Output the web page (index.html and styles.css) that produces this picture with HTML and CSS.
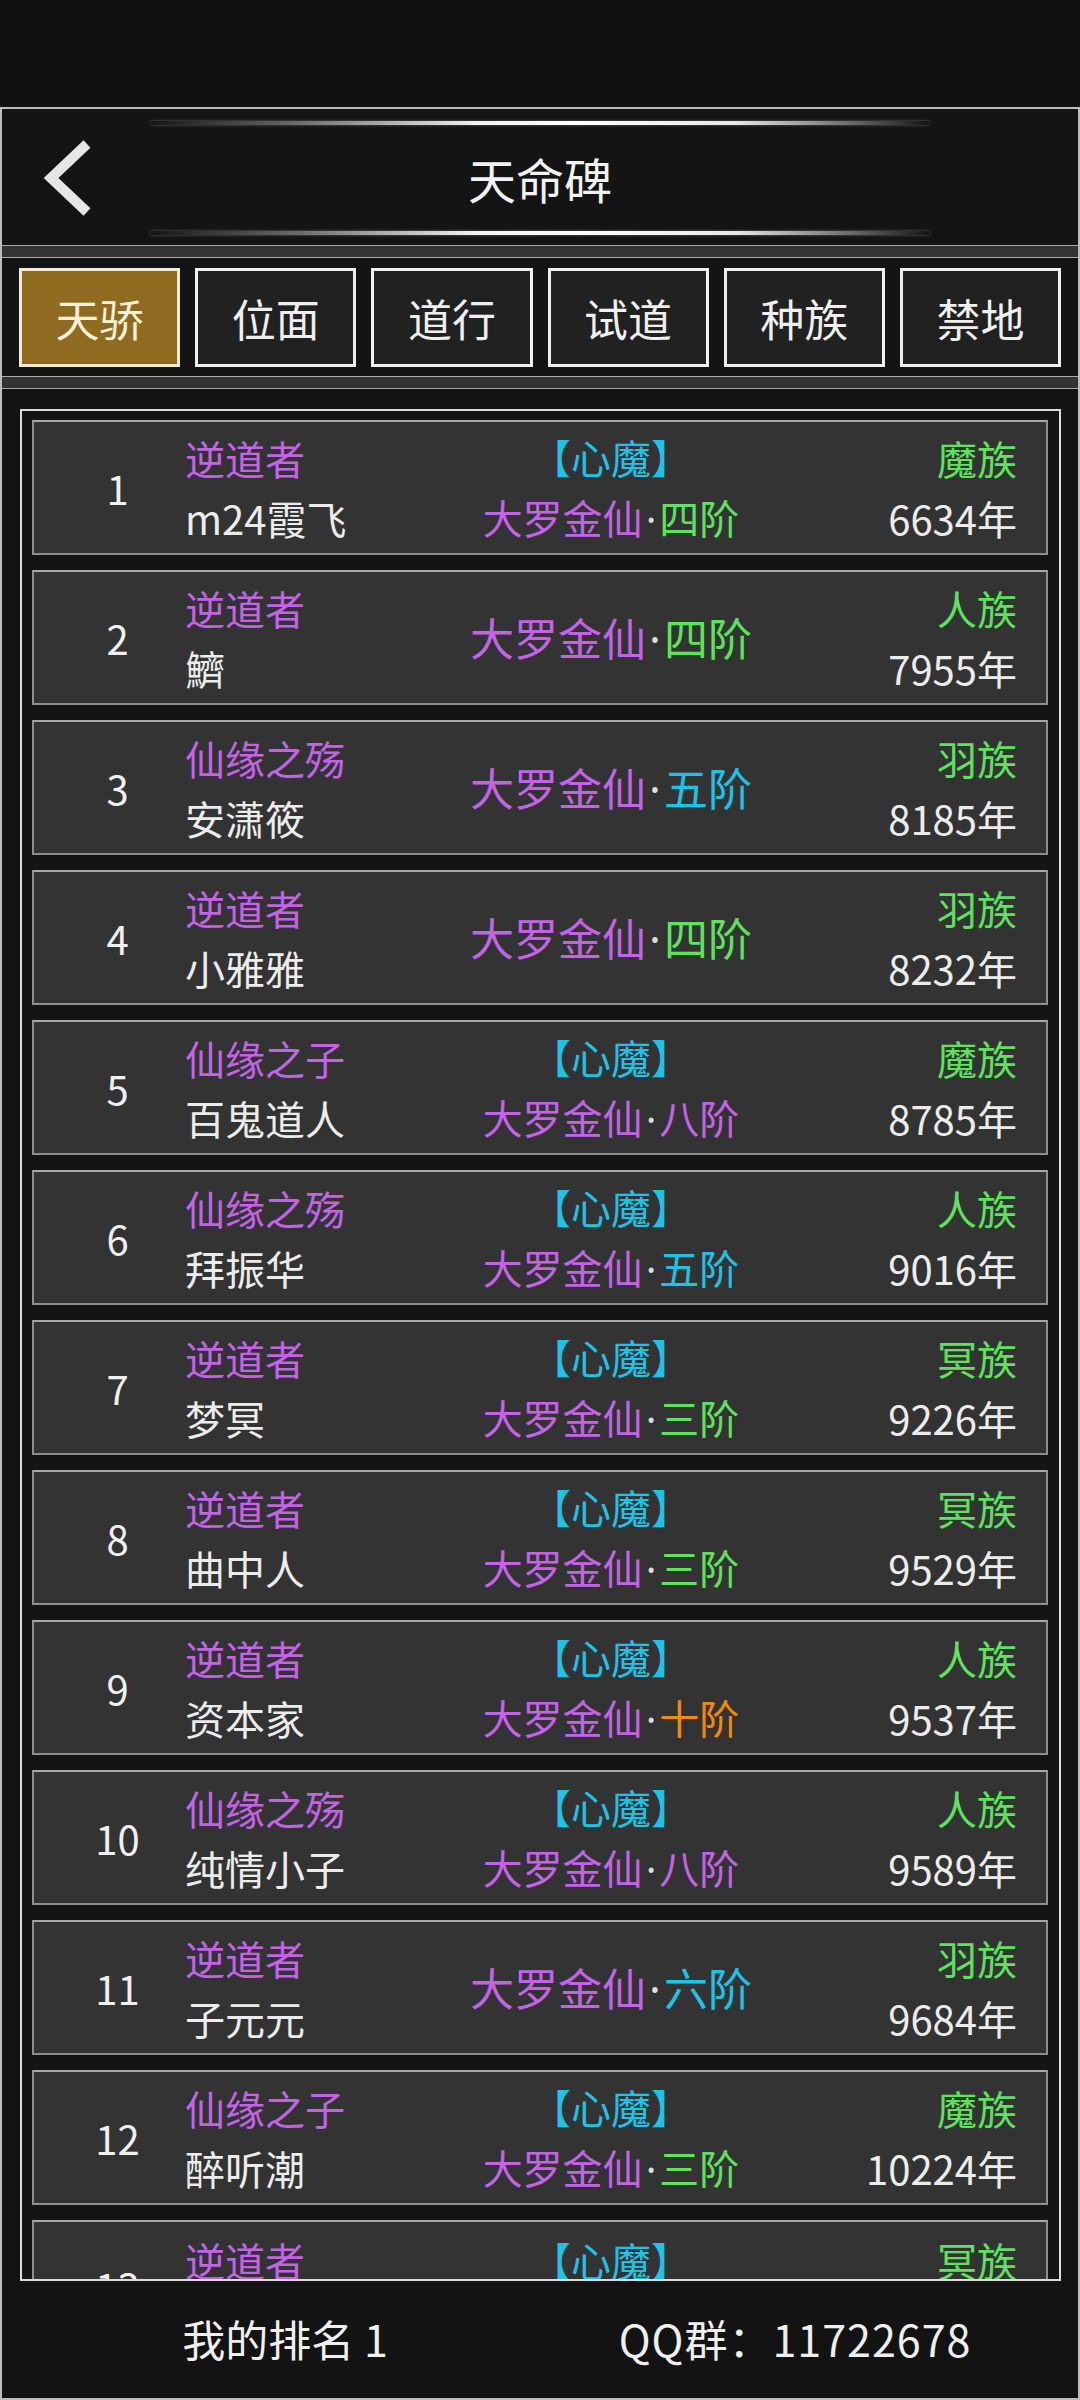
FILE: index.html
```html
<!DOCTYPE html>
<html lang="zh-CN">
<head>
<meta charset="utf-8">
<title>天命碑</title>
<link rel="stylesheet" href="styles.css">
</head>
<body>
<div class="status"></div>
<div class="app">
  <header class="header">
    <div class="glow"></div>
    <div class="header-mid">
      <div class="back">
        <svg width="50" height="80" viewBox="0 0 50 80"><polyline points="44,6 8,40 44,74" fill="none" stroke="#e6e6e6" stroke-width="10" stroke-linejoin="miter"/></svg>
      </div>
      <div class="title">天命碑</div>
      <div></div>
    </div>
    <div class="glow"></div>
  </header>
  <div class="sep"></div>
  <nav class="tabs">
    <div class="tab active">天骄</div>
    <div class="tab">位面</div>
    <div class="tab">道行</div>
    <div class="tab">试道</div>
    <div class="tab">种族</div>
    <div class="tab">禁地</div>
  </nav>
  <div class="sep"></div>
  <main class="list-wrap">
    <div class="list">
      <div class="card"><div class="rank">1</div><div class="col name"><span class="p">逆道者</span><span>m24霞飞</span></div><div class="col mid"><span class="c">【心魔】</span><span><span class="p">大罗金仙</span><span class="dot">·</span><span class="g">四阶</span></span></div><div class="col right"><span class="g">魔族</span><span>6634年</span></div></div>
      <div class="card"><div class="rank">2</div><div class="col name"><span class="p">逆道者</span><span>鱭</span></div><div class="col mid big"><span><span class="p">大罗金仙</span><span class="dot">·</span><span class="g">四阶</span></span></div><div class="col right"><span class="g">人族</span><span>7955年</span></div></div>
      <div class="card"><div class="rank">3</div><div class="col name"><span class="p">仙缘之殇</span><span>安潇筱</span></div><div class="col mid big"><span><span class="p">大罗金仙</span><span class="dot">·</span><span class="c">五阶</span></span></div><div class="col right"><span class="g">羽族</span><span>8185年</span></div></div>
      <div class="card"><div class="rank">4</div><div class="col name"><span class="p">逆道者</span><span>小雅雅</span></div><div class="col mid big"><span><span class="p">大罗金仙</span><span class="dot">·</span><span class="g">四阶</span></span></div><div class="col right"><span class="g">羽族</span><span>8232年</span></div></div>
      <div class="card"><div class="rank">5</div><div class="col name"><span class="p">仙缘之子</span><span>百鬼道人</span></div><div class="col mid"><span class="c">【心魔】</span><span><span class="p">大罗金仙</span><span class="dot">·</span><span class="p">八阶</span></span></div><div class="col right"><span class="g">魔族</span><span>8785年</span></div></div>
      <div class="card"><div class="rank">6</div><div class="col name"><span class="p">仙缘之殇</span><span>拜振华</span></div><div class="col mid"><span class="c">【心魔】</span><span><span class="p">大罗金仙</span><span class="dot">·</span><span class="c">五阶</span></span></div><div class="col right"><span class="g">人族</span><span>9016年</span></div></div>
      <div class="card"><div class="rank">7</div><div class="col name"><span class="p">逆道者</span><span>梦冥</span></div><div class="col mid"><span class="c">【心魔】</span><span><span class="p">大罗金仙</span><span class="dot">·</span><span class="g">三阶</span></span></div><div class="col right"><span class="g">冥族</span><span>9226年</span></div></div>
      <div class="card"><div class="rank">8</div><div class="col name"><span class="p">逆道者</span><span>曲中人</span></div><div class="col mid"><span class="c">【心魔】</span><span><span class="p">大罗金仙</span><span class="dot">·</span><span class="g">三阶</span></span></div><div class="col right"><span class="g">冥族</span><span>9529年</span></div></div>
      <div class="card"><div class="rank">9</div><div class="col name"><span class="p">逆道者</span><span>资本家</span></div><div class="col mid"><span class="c">【心魔】</span><span><span class="p">大罗金仙</span><span class="dot">·</span><span class="o">十阶</span></span></div><div class="col right"><span class="g">人族</span><span>9537年</span></div></div>
      <div class="card"><div class="rank">10</div><div class="col name"><span class="p">仙缘之殇</span><span>纯情小子</span></div><div class="col mid"><span class="c">【心魔】</span><span><span class="p">大罗金仙</span><span class="dot">·</span><span class="p">八阶</span></span></div><div class="col right"><span class="g">人族</span><span>9589年</span></div></div>
      <div class="card"><div class="rank">11</div><div class="col name"><span class="p">逆道者</span><span>子元元</span></div><div class="col mid big"><span><span class="p">大罗金仙</span><span class="dot">·</span><span class="c">六阶</span></span></div><div class="col right"><span class="g">羽族</span><span>9684年</span></div></div>
      <div class="card"><div class="rank">12</div><div class="col name"><span class="p">仙缘之子</span><span>醉听潮</span></div><div class="col mid"><span class="c">【心魔】</span><span><span class="p">大罗金仙</span><span class="dot">·</span><span class="g">三阶</span></span></div><div class="col right"><span class="g">魔族</span><span>10224年</span></div></div>
      <div class="card card-last"><div class="rank">13</div><div class="col name"><span class="p">逆道者</span></div><div class="col mid"><span class="c">【心魔】</span></div><div class="col right"><span class="g">冥族</span></div></div>
    </div>
  </main>
  <footer class="footer">
    <div class="f-left">我的排名 1</div>
    <div class="f-right">QQ群：11722678</div>
  </footer>
</div>
</body>
</html>
```

FILE: styles.css
```css
* { box-sizing: border-box; }
html, body {
  margin: 0;
  padding: 0;
  background: #111111;
}
body {
  width: 1080px;
  height: 2400px;
  overflow: hidden;
  font-family: "Noto Sans CJK SC", "Noto Sans", sans-serif;
  color: #ececec;
}
.status {
  height: 107px;
  background: #111111;
}
.app {
  height: 2293px;
  border: 2px solid #bdbdbd;
  display: flex;
  flex-direction: column;
  background: #131313;
}
.header {
  height: 136px;
  padding-top: 12px;
  padding-bottom: 10px;
  display: flex;
  flex-direction: column;
  background: #141414;
}
.glow {
  height: 4px;
  width: 780px;
  margin: 0 auto;
  background: linear-gradient(90deg, rgba(255,255,255,0) 0%, rgba(255,255,255,0.35) 18%, rgba(255,255,255,0.95) 42%, #ffffff 55%, rgba(255,255,255,0.9) 75%, rgba(255,255,255,0) 100%);
  box-shadow: 0 0 3px rgba(255,255,255,0.35);
  border-radius: 2px;
}
.header-mid {
  height: 106px;
  display: grid;
  grid-template-columns: 1fr auto 1fr;
  align-items: center;
}
.back {
  padding-left: 41px;
  display: flex;
  align-items: center;
}
.back svg { display: block; }
.title {
  font-size: 48px;
  color: #f2f2f2;
}
.sep {
  height: 13px;
  background: #333333;
  border-top: 1px solid #a8a8a8;
  border-bottom: 1px solid #a8a8a8;
}
.tabs {
  padding: 10px 17px 9px 17px;
  display: flex;
  gap: 15px;
  background: #141414;
}
.tab {
  flex: 1;
  height: 99px;
  border: 3px solid #f0f0f0;
  background: #212121;
  display: flex;
  align-items: center;
  justify-content: center;
  font-size: 44px;
  color: #efefef;
}
.tab.active {
  background: #8f6b21;
  border-color: #f4ecd2;
  color: #fbf1d6;
}
.list-wrap {
  padding: 20px 17px 0 18px;
  background: #131313;
}
.list {
  height: 1872px;
  border: 2px solid #dcdcdc;
  padding: 9px 11px 0 10px;
  overflow: hidden;
  background: #141414;
}
.card {
  height: 135px;
  margin-bottom: 15px;
  background: #333333;
  border: 2px solid #8e8e8e;
  border-top-color: #a6a6a6;
  display: grid;
  grid-template-columns: 151px 260px 332px 240px;
  align-items: center;
  font-size: 40px;
  line-height: 60px;
}
.card-last {
  align-items: start;
  padding-top: 8px;
}
.card-last .rank {
  padding-top: 26px;
}
.rank {
  text-align: center;
  padding-left: 16px;
  color: #f0f0f0;
}
.col {
  display: flex;
  flex-direction: column;
}
.name { align-items: flex-start; }
.mid { align-items: center; white-space: nowrap; }
.mid.big { font-size: 44px; }
.right { align-items: flex-end; }
.p { color: #c463e8; }
.g { color: #5de35c; }
.c { color: #1ec3e8; }
.o { color: #f28a0a; }
.dot {
  font-family: "Noto Sans", sans-serif;
  color: #dddddd;
  margin: 0 3px;
}
.footer {
  flex: 1;
  display: grid;
  grid-template-columns: 566px 454px;
  align-items: center;
  font-size: 43px;
  color: #efefef;
  background: #131313;
  padding-bottom: 4px;
}
.f-left, .f-right { text-align: center; }
.f-right { letter-spacing: 1px; }
```
